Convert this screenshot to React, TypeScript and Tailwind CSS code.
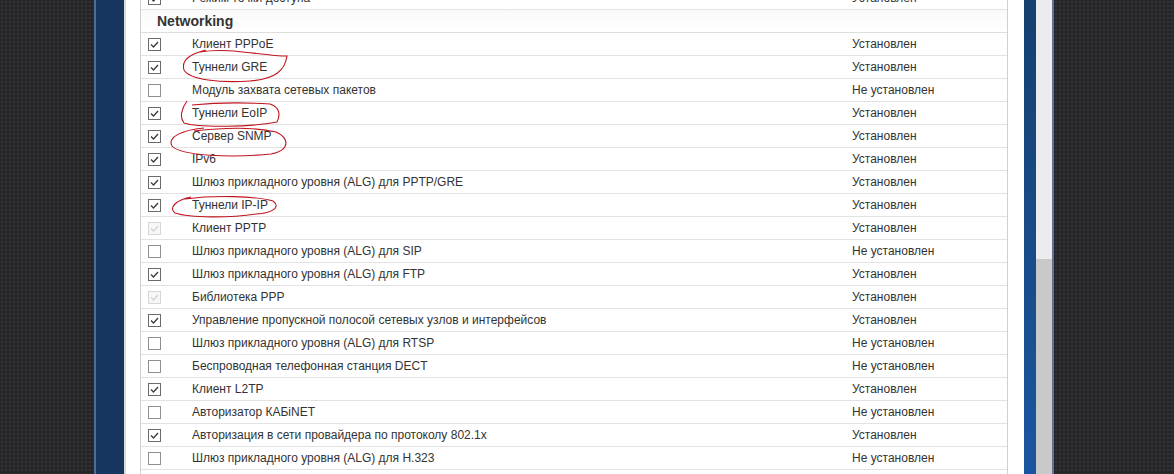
import React from "react";

type Row = {
  name: string;
  state: "on" | "off" | "locked";
  installed: boolean;
};

const ROWS: Row[] = [
  { name: "Клиент PPPoE", state: "on", installed: true },
  { name: "Туннели GRE", state: "on", installed: true },
  { name: "Модуль захвата сетевых пакетов", state: "off", installed: false },
  { name: "Туннели EoIP", state: "on", installed: true },
  { name: "Сервер SNMP", state: "on", installed: true },
  { name: "IPv6", state: "on", installed: true },
  { name: "Шлюз прикладного уровня (ALG) для PPTP/GRE", state: "on", installed: true },
  { name: "Туннели IP-IP", state: "on", installed: true },
  { name: "Клиент PPTP", state: "locked", installed: true },
  { name: "Шлюз прикладного уровня (ALG) для SIP", state: "off", installed: false },
  { name: "Шлюз прикладного уровня (ALG) для FTP", state: "on", installed: true },
  { name: "Библиотека PPP", state: "locked", installed: true },
  { name: "Управление пропускной полосой сетевых узлов и интерфейсов", state: "on", installed: true },
  { name: "Шлюз прикладного уровня (ALG) для RTSP", state: "off", installed: false },
  { name: "Беспроводная телефонная станция DECT", state: "off", installed: false },
  { name: "Клиент L2TP", state: "on", installed: true },
  { name: "Авторизатор КАБiNET", state: "off", installed: false },
  { name: "Авторизация в сети провайдера по протоколу 802.1x", state: "on", installed: true },
  { name: "Шлюз прикладного уровня (ALG) для H.323", state: "off", installed: false },
];

function Checkbox({ state }: { state: Row["state"] }) {
  const box =
    state === "on"
      ? "border-[#6b6b6b] bg-white"
      : state === "off"
      ? "border-[#8f8f8f] bg-white"
      : "border-[#d6d6d6] bg-[#f7f7f7]";
  const stroke = state === "locked" ? "#d2d2d2" : "#3a3a3a";
  return (
    <div className={`w-[13px] h-[13px] border ${box} flex items-center justify-center`}>
      {state !== "off" && (
        <svg width="11" height="11" viewBox="0 0 11 11">
          <polyline points="2,5.5 4.5,8 9,3" fill="none" stroke={stroke} strokeWidth="1.3" />
        </svg>
      )}
    </div>
  );
}

function ComponentRow({ row }: { row: Row }) {
  return (
    <div className="grid grid-cols-[51px_660px_1fr] h-[23px] items-center border-b border-[#e2e2e2] text-[12px] text-[#333]">
      <div className="pl-[7px]">
        <Checkbox state={row.state} />
      </div>
      <div className="whitespace-nowrap">{row.name}</div>
      <div className="whitespace-nowrap">{row.installed ? "Установлен" : "Не установлен"}</div>
    </div>
  );
}

const dark =
  "bg-[#262628] bg-[radial-gradient(circle,#323235_1px,transparent_1.6px)] bg-[length:4px_4px]";

export default function App() {
  return (
    <div
      className="relative w-[1174px] h-[474px] overflow-hidden flex"
      style={{ fontFamily: '"Liberation Sans", Arial, sans-serif' }}
    >
      <div className={`w-[94px] shrink-0 ${dark}`} />
      <div className="w-[2px] shrink-0 bg-[#4f6c98]" />
      <div className="w-[28px] shrink-0 bg-[#16365f]" />
      <div className="w-[2px] shrink-0 bg-[#dadada]" />

      <div className="w-[898px] shrink-0 bg-white pl-[14px] pr-[16px] overflow-hidden">
        <div className="mt-[-13px] border-x border-[#d0d0d0]">
          <ComponentRow row={{ name: "Режим точки доступа", state: "on", installed: true }} />
          <div className="h-[23px] flex items-center pl-[16px] border-b border-[#dedede] bg-gradient-to-b from-[#f9f9f9] to-white text-[14px] font-bold text-[#333]">
            Networking
          </div>
          {ROWS.map((r) => (
            <ComponentRow key={r.name} row={r} />
          ))}
          <div className="h-[30px]" />
        </div>
      </div>

      <div className="w-[12px] shrink-0 bg-gradient-to-b from-[#15406f] to-[#1a56a0]" />
      <div className="w-[16px] shrink-0 flex flex-col">
        <div className="h-[259px] bg-[#ececee]" />
        <div className="flex-1 bg-[#c9c9c9]" />
      </div>
      <div className="w-[2px] shrink-0 bg-[#5d7499]" />
      <div className={`flex-1 ${dark}`} />

      <svg
        className="absolute inset-0 pointer-events-none"
        width="1174"
        height="474"
        viewBox="0 0 1174 474"
        fill="none"
        stroke="#c0141e"
        strokeWidth="1.1"
      >
        <path d="M200 52 C230 47 262 56 287 56 C285 70 276 79 250 81 C220 83 190 80 184 70 C181 60 190 54 206 50" />
        <path d="M187 101 C182 108 179 117 184 123 C200 128 252 127 277 122 C281 114 279 107 270 104 C240 102 212 103 192 105" />
        <path d="M204 128 C182 130 167 137 172 146 C181 156 232 158 271 154 C291 150 289 138 276 132 C250 126 220 128 194 131" />
        <path d="M185 199 C215 195 256 196 273 201 C281 207 273 213 256 214 C230 218 190 218 175 213 C168 208 176 200 191 197" />
      </svg>
    </div>
  );
}
